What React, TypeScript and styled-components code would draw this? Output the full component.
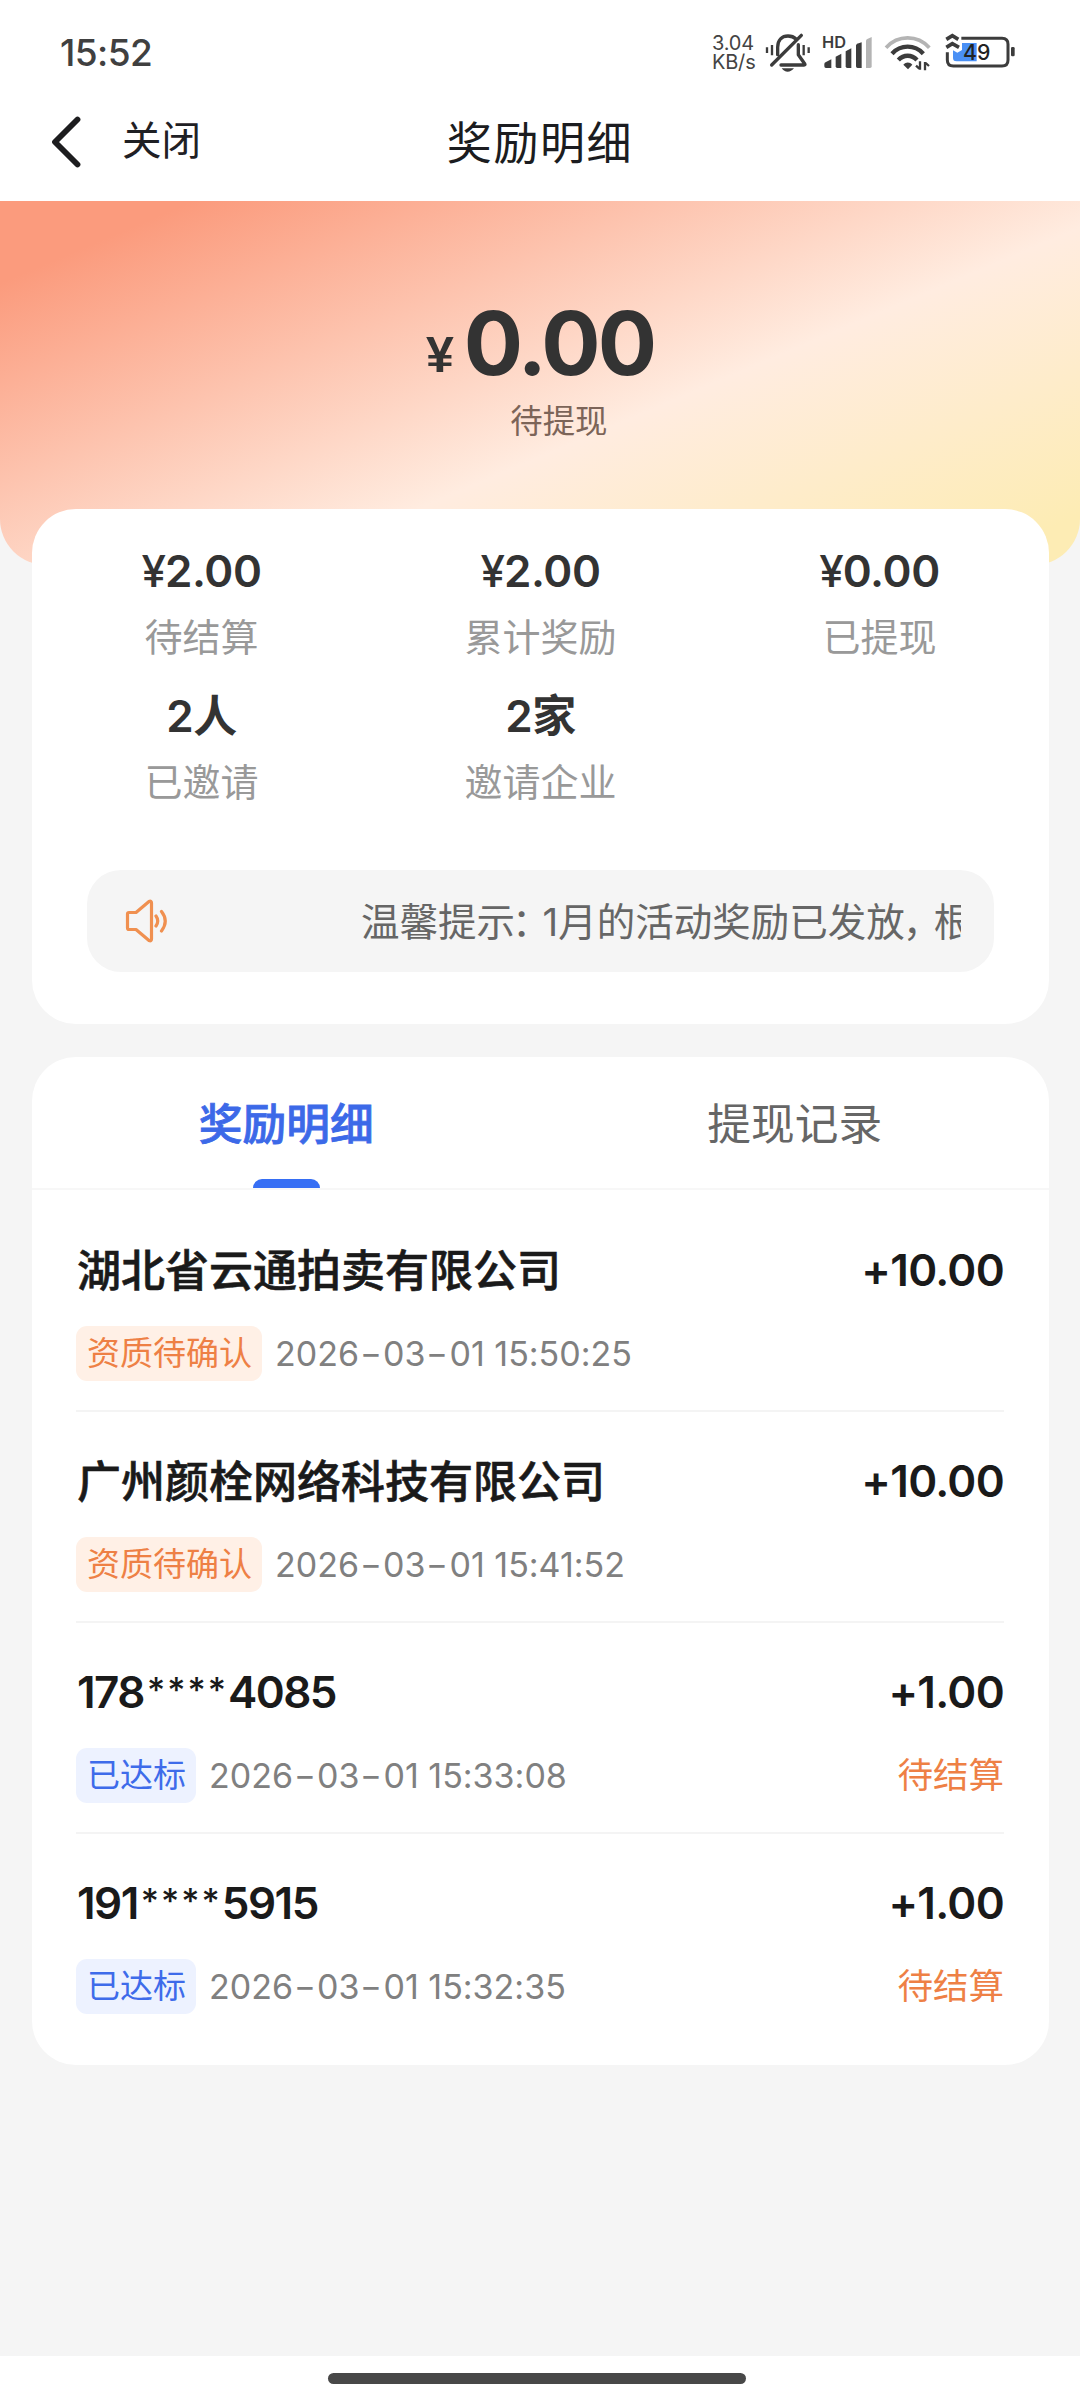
import React from 'react';
import styled, { createGlobalStyle } from 'styled-components';

const GlobalStyle = createGlobalStyle`
  * { box-sizing: border-box; }
  body {
    margin: 0;
    background: #f5f5f5;
    font-family: Inter, "Noto Sans CJK SC", sans-serif;
    font-feature-settings: "calt" 0;
  }
`;

const Page = styled.div`
  width: 1080px;
  height: 2400px;
  display: flex;
  flex-direction: column;
  background: #f5f5f5;
  overflow: hidden;
`;

const TopBar = styled.header`
  height: 201px;
  background: #fff;
  flex: none;
`;

const StatusBar = styled.div`
  height: 104px;
  display: flex;
  align-items: center;
  justify-content: space-between;
  padding: 0 64px 0 60px;
`;

const Clock = styled.div`
  padding-top: 1px;
  font-size: 37px;
  font-weight: 550;
  letter-spacing: -0.6px;
  color: #404040;
`;

const StatusIcons = styled.div`
  display: flex;
  align-items: center;
`;

const NetSpeed = styled.div`
  display: flex;
  flex-direction: column;
  width: 50px;
  margin: 2px 2px 0 0;
  font-size: 20px;
  line-height: 19px;
  letter-spacing: -0.2px;
  color: #444;
`;

const NavRow = styled.div`
  height: 76px;
  display: grid;
  grid-template-columns: 1fr auto 1fr;
  align-items: center;
`;

const NavLeft = styled.div`
  display: flex;
  align-items: center;
  gap: 40px;
  padding-left: 50px;
  font-size: 39.5px;
  line-height: 56px;
  color: #1f2024;
`;

const CloseLabel = styled.span`
  margin-top: -2px;
`;

const Title = styled.h1`
  margin: 3px 0 0;
  font-size: 45px;
  line-height: 60px;
  letter-spacing: 1.6px;
  font-weight: 400;
  color: #1b1c20;
`;

const Hero = styled.section`
  height: 364px;
  flex: none;
  display: flex;
  justify-content: center;
  padding: 94px 0 0;
  border-radius: 0 0 46px 46px;
  background: linear-gradient(157deg, #fb9b7d 0%, #fb9b7d 10%, #ffece0 59%, #fdecb4 94%);
`;

const Balance = styled.div`
  display: flex;
`;

const Currency = styled.span`
  font-family: "Liberation Sans", sans-serif;
  font-weight: 700;
  font-size: 50px;
  line-height: 60px;
  margin: 30px 10px 0 0;
  color: #333;
`;

const BalanceColumn = styled.div`
  display: flex;
  flex-direction: column;
  align-items: center;
`;

const BalanceValue = styled.div`
  font-size: 88px;
  font-weight: 650;
  line-height: 96px;
  letter-spacing: -3px;
  color: #333;
`;

const BalanceLabel = styled.div`
  margin-top: 11px;
  font-size: 32.4px;
  line-height: 40px;
  color: #7c6458;
`;

const Card = styled.section<{ $pull: number; $height: number }>`
  flex: none;
  width: 1017px;
  height: ${(p) => p.$height}px;
  margin: ${(p) => p.$pull}px 0 0 32px;
  background: #fff;
  border-radius: 44px;
`;

const Stats = styled.div`
  display: grid;
  grid-template-columns: repeat(3, 1fr);
  grid-auto-rows: 145px;
  padding-top: 32px;
  height: 361px;
`;

const Stat = styled.div`
  display: flex;
  flex-direction: column;
  align-items: center;
`;

const StatValue = styled.div`
  font-size: 44px;
  line-height: 60px;
  font-weight: 620;
  letter-spacing: -0.4px;
  color: #333;
`;

const Yen = styled.span`
  font-weight: 500;
  letter-spacing: -1px;
`;

const StatLabel = styled.div`
  margin-top: 9px;
  font-size: 38px;
  line-height: 54px;
  color: #999;
`;

const Notice = styled.div`
  height: 102px;
  margin: 0 55px;
  padding: 0 33px 0 38px;
  display: flex;
  align-items: center;
  background: #f5f5f5;
  border-radius: 34px;
`;

const NoticeText = styled.div`
  flex: 1;
  margin: 1px 0 0 192px;
  overflow: hidden;
  white-space: nowrap;
  font-size: 38.5px;
  line-height: 56px;
  color: #666;
`;

const Colon = styled.span`
  margin-left: -3px;
  letter-spacing: -8px;
`;

const Comma = styled.span`
  margin-left: -2px;
  letter-spacing: -7.5px;
`;

const Tabs = styled.div`
  height: 133px;
  display: grid;
  grid-template-columns: 1fr 1fr;
  border-bottom: 2px solid #f7f7f7;
`;

const Tab = styled.div<{ $active?: boolean }>`
  display: flex;
  flex-direction: column;
  align-items: center;
  justify-content: space-between;
  padding-top: 38px;
  font-size: 43.7px;
  line-height: 60px;
  font-weight: ${(p) => (p.$active ? 500 : 400)};
  -webkit-text-stroke: ${(p) => (p.$active ? '0.8px currentColor' : '0')};
  color: ${(p) => (p.$active ? '#3c69e8' : '#666')};
`;

const TabMark = styled.div`
  width: 67px;
  height: 9px;
  border-radius: 9px 9px 0 0;
  background: #366ef4;
`;

const List = styled.div`
  padding: 11px 45px 0 44px;
`;

const Record = styled.div`
  height: 211px;
  padding-top: 39px;
  border-bottom: 2px solid #f4f4f4;
  &:last-child { border-bottom: 0; }
`;

const RecordLine = styled.div<{ $gap?: number }>`
  display: flex;
  align-items: center;
  justify-content: space-between;
  margin-top: ${(p) => p.$gap ?? 0}px;
`;

const Name = styled.div<{ $numeric?: boolean }>`
  padding: ${(p) => (p.$numeric ? '0 0 0 1px' : '2px 0 0 1px')};
  font-size: 44px;
  line-height: ${(p) => (p.$numeric ? 60 : 58)}px;
  letter-spacing: ${(p) => (p.$numeric ? '-1.5px' : '0')};
  font-weight: ${(p) => (p.$numeric ? 600 : 500)};
  -webkit-text-stroke: ${(p) => (p.$numeric ? '0' : '0.6px currentColor')};
  color: #1a1a1a;
`;

const Stars = styled.span`
  position: relative;
  top: -5px;
  margin-left: 3px;
  font-size: 35px;
  font-weight: 500;
  line-height: 1;
  letter-spacing: 2px;
`;

const Amount = styled.div`
  font-size: 44px;
  line-height: 60px;
  letter-spacing: -0.7px;
  font-weight: 640;
  color: #1a1a1a;
`;

const Meta = styled.div`
  display: flex;
  align-items: center;
  gap: 12px;
`;

const Tag = styled.span<{ $tone: 'orange' | 'blue' }>`
  height: 55px;
  padding: 0 10px 0 11px;
  border-radius: 11px;
  font-size: 33px;
  line-height: 55px;
  color: ${(p) => (p.$tone === 'orange' ? '#ee8045' : '#3e6bea')};
  background: ${(p) => (p.$tone === 'orange' ? '#fff0e6' : '#edf2ff')};
`;

const Time = styled.span`
  padding-left: 1px;
  font-size: 34px;
  line-height: 54px;
  letter-spacing: 0;
  color: #808080;
`;

const Dash = styled.span`
  display: inline-block;
  width: 16px;
  margin: 0 4px;
  text-align: center;
  transform: scaleX(1.4);
`;

const Status = styled.span`
  font-size: 35.5px;
  line-height: 54px;
  color: #ee8045;
`;

const HomeBar = styled.footer`
  height: 44px;
  flex: none;
  margin-top: auto;
  padding-top: 17px;
  background: #fff;
`;

const HomeHandle = styled.div`
  width: 418px;
  height: 11px;
  margin-left: 328px;
  border-radius: 6px;
  background: #484848;
`;

const SignalSvg = styled.svg`
  margin-right: 6px;
`;

const INK = '#3c3c3c';

const MuteIcon = () => (
  <svg width="52" height="44" viewBox="222 60 156 132" fill="none" stroke={INK} strokeLinecap="round">
    <path d="M231 112v17M246 105v31M341 105v31M356 112v17" strokeWidth="7" strokeLinecap="butt" />
    <path d="M263 134V112C263 90 276 78 294 78C304 78 312 81 318 87" strokeWidth="10" />
    <path d="M325 104V134L344 161C346 164 345 165 342 165H273" strokeWidth="10" strokeLinejoin="round" />
    <path d="M245 165L334 76" strokeWidth="10" />
    <path d="M275 175H312C306 182 300 185 293 185C286 185 280 182 275 175Z" fill={INK} stroke="none" />
  </svg>
);

const SignalIcon = () => (
  <SignalSvg width="56" height="44" viewBox="378 60 168 132" fill={INK}>
    <text x="396" y="113" fontFamily="Inter, sans-serif" fontSize="48" fontWeight="600" textLength="72" lengthAdjust="spacingAndGlyphs">HD</text>
    <path d="M403 162Q403 158 408 156L424 148V174H408Q403 174 403 169Z" />
    <path d="M437 140L454 131V174H442Q437 174 437 169Z" />
    <path d="M467 124L484 115V174H472Q467 174 467 169Z" />
    <path d="M498 106Q500 100 506 100L515 97V174H503Q498 174 498 169Z" />
    <path d="M528 93Q528 89 532 87L545 81V169Q545 174 540 174H528Z" fill="#b4b4b4" />
  </SignalSvg>
);

const WifiIcon = () => (
  <svg width="60" height="44" viewBox="564 60 180 132" fill="none">
    <path d="M588 113C624 74 682 74 718 113" stroke="#b4b4b4" strokeWidth="11" />
    <path d="M606 131C632 103 674 103 700 131" stroke={INK} strokeWidth="13" />
    <path d="M625 150C641 133 665 133 681 150" stroke={INK} strokeWidth="13" />
    <path d="M640 164C648 155 659 155 667 164L654 178Z" fill={INK} />
    <path d="M690 154V179M678 167L688 176M705 181V156M717 168L707 159" stroke={INK} strokeWidth="7" />
  </svg>
);

const BatteryIcon = () => (
  <svg width="78" height="44" viewBox="744 60 234 132" fill="none">
    <path d="M789 121L802 128L816 120V99H860V154H800C792 154 789 150 789 144Z" fill="#4a90f5" />
    <path d="M814 85H936C948 85 954 91 954 103V150C954 162 948 168 936 168H790C778 168 772 162 772 150V127" stroke={INK} strokeWidth="9" />
    <rect x="963" y="111" width="11" height="28" rx="4" fill={INK} />
    <path d="M769 88L787 77L805 88M769 112L787 101L807 112" stroke={INK} strokeWidth="11" />
    <text x="819" y="151" fontFamily="Inter, sans-serif" fontSize="64" fontWeight="500" fill="#222" textLength="82" lengthAdjust="spacingAndGlyphs">49</text>
  </svg>
);

const BackIcon = () => (
  <svg width="32" height="54" viewBox="0 0 32 54" fill="none" stroke="#1d1d1f" strokeWidth="5.8" strokeLinecap="round" strokeLinejoin="round">
    <path d="M27.5 4.500L5 27L27.500 49.500" />
  </svg>
);

const SpeakerIcon = () => (
  <svg width="44" height="44" viewBox="0 0 44 44" fill="none" stroke="#f09050" strokeWidth="3.2" strokeLinecap="round" strokeLinejoin="round">
    <path d="M2.500 15Q2.500 13.500 4 13.500H11L24 2.500Q26.500 1.500 26.500 4V40Q26.500 42.500 24 41.500L11 30.500H4Q2.500 30.500 2.500 29Z" />
    <path d="M31 17Q34.500 22 31 27M36.500 12.500Q44 22 36.500 32" />
  </svg>
);

const stats = [
  { yen: true, value: '2.00', label: '待结算' },
  { yen: true, value: '2.00', label: '累计奖励' },
  { yen: true, value: '0.00', label: '已提现' },
  { yen: false, value: '2人', label: '已邀请' },
  { yen: false, value: '2家', label: '邀请企业' },
];

type RecordItem = {
  name: string;
  numeric?: boolean;
  amount: string;
  tag: string;
  tone: 'orange' | 'blue';
  time: string;
  status?: string;
};

const records: RecordItem[] = [
  { name: '湖北省云通拍卖有限公司', amount: '+10.00', tag: '资质待确认', tone: 'orange', time: '2026-03-01 15:50:25' },
  { name: '广州颜栓网络科技有限公司', amount: '+10.00', tag: '资质待确认', tone: 'orange', time: '2026-03-01 15:41:52' },
  { name: '178****4085', numeric: true, amount: '+1.00', tag: '已达标', tone: 'blue', time: '2026-03-01 15:33:08', status: '待结算' },
  { name: '191****5915', numeric: true, amount: '+1.00', tag: '已达标', tone: 'blue', time: '2026-03-01 15:32:35', status: '待结算' },
];

const MaskedName = ({ text }: { text: string }) => (
  <>
    {text.split(/(\*+)/).map((part, i) =>
      part.startsWith('*') ? <Stars key={i}>{part}</Stars> : part,
    )}
  </>
);

const DateTime = ({ text }: { text: string }) => (
  <Time>
    {text.split(/(-)/).map((part, i) => (part === '-' ? <Dash key={i}>-</Dash> : part))}
  </Time>
);

export default function App() {
  return (
    <Page>
      <GlobalStyle />
      <TopBar>
        <StatusBar>
          <Clock>15:52</Clock>
          <StatusIcons>
            <NetSpeed>
              <span>3.04</span>
              <span>KB/s</span>
            </NetSpeed>
            <MuteIcon />
            <SignalIcon />
            <WifiIcon />
            <BatteryIcon />
          </StatusIcons>
        </StatusBar>
        <NavRow>
          <NavLeft>
            <BackIcon />
            <CloseLabel>关闭</CloseLabel>
          </NavLeft>
          <Title>奖励明细</Title>
        </NavRow>
      </TopBar>

      <Hero>
        <Balance>
          <Currency>¥</Currency>
          <BalanceColumn>
            <BalanceValue>0.00</BalanceValue>
            <BalanceLabel>待提现</BalanceLabel>
          </BalanceColumn>
        </Balance>
      </Hero>

      <Card $pull={-56} $height={515}>
        <Stats>
          {stats.map((s) => (
            <Stat key={s.label}>
              <StatValue>{s.yen && <Yen>¥</Yen>}{s.value}</StatValue>
              <StatLabel>{s.label}</StatLabel>
            </Stat>
          ))}
        </Stats>
        <Notice>
          <SpeakerIcon />
          <NoticeText>
            温馨提示<Colon>：</Colon>1月的活动奖励已发放<Comma>，</Comma>根
          </NoticeText>
        </Notice>
      </Card>

      <Card $pull={33} $height={1008}>
        <Tabs>
          <Tab $active>奖励明细<TabMark /></Tab>
          <Tab>提现记录</Tab>
        </Tabs>
        <List>
          {records.map((r) => (
            <Record key={r.time}>
              <RecordLine>
                <Name $numeric={r.numeric}><MaskedName text={r.name} /></Name>
                <Amount>{r.amount}</Amount>
              </RecordLine>
              <RecordLine $gap={26}>
                <Meta>
                  <Tag $tone={r.tone}>{r.tag}</Tag>
                  <DateTime text={r.time} />
                </Meta>
                {r.status && <Status>{r.status}</Status>}
              </RecordLine>
            </Record>
          ))}
        </List>
      </Card>

      <HomeBar>
        <HomeHandle />
      </HomeBar>
    </Page>
  );
}
